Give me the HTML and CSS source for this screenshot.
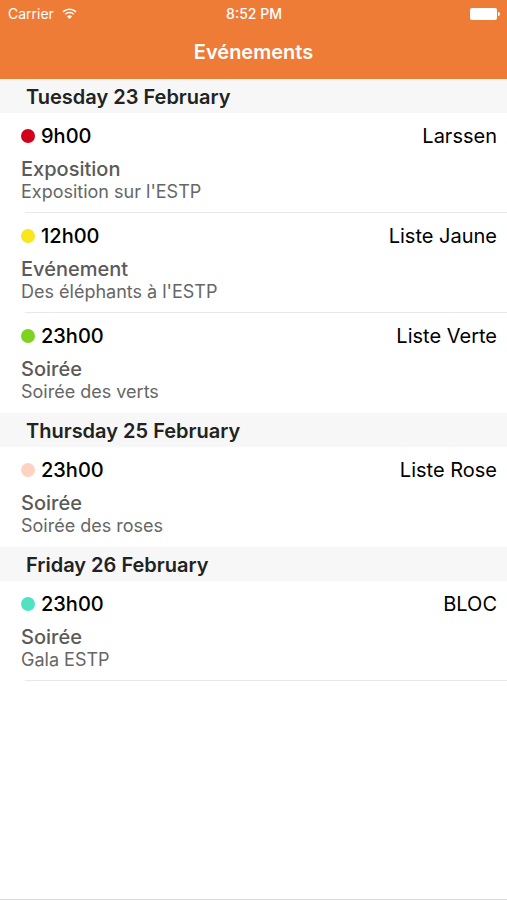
FILE: index.html
```html
<!DOCTYPE html>
<html lang="fr">
<head>
    <meta charset="UTF-8">
    <meta name="viewport" content="width=device-width, initial-scale=1.0">
    <title>Evénements</title>
    <link rel="stylesheet" href="styles.css">
</head>
<body>

<header class="topBar">
    <div class="statusBar">
        <div class="carrier">
            <span>Carrier</span>
            <svg class="wifi" viewBox="0 0 16 12" width="15" height="11">
                <path d="M1 4.2a10 10 0 0 1 14 0M3.4 6.8a6.6 6.6 0 0 1 9.2 0" fill="none" stroke="#fff" stroke-width="1.8"/>
                <path d="M8 12L5.3 9.2a3.8 3.8 0 0 1 5.4 0z" fill="#fff"/>
            </svg>
        </div>
        <div class="clock">8:52 PM</div>
        <div class="battery">
            <svg viewBox="0 0 30 12" width="30" height="12">
                <rect x="0" y="0" width="27" height="12" rx="2" fill="#fff"/>
                <path d="M28 4a2 2 0 0 1 0 4z" fill="#fff"/>
            </svg>
        </div>
    </div>
    <h1>Evénements</h1>
</header>

<main class="agenda">
    <section>
        <h2>Tuesday 23 February</h2>
        <ul>
            <li class="event">
                <div class="eventHead">
                    <span class="dot red"></span>
                    <span class="time">9h00</span>
                    <span class="host">Larssen</span>
                </div>
                <h3>Exposition</h3>
                <p>Exposition sur l'ESTP</p>
            </li>
            <li class="event">
                <div class="eventHead">
                    <span class="dot yellow"></span>
                    <span class="time">12h00</span>
                    <span class="host">Liste Jaune</span>
                </div>
                <h3>Evénement</h3>
                <p>Des éléphants à l'ESTP</p>
            </li>
            <li class="event">
                <div class="eventHead">
                    <span class="dot green"></span>
                    <span class="time">23h00</span>
                    <span class="host">Liste Verte</span>
                </div>
                <h3>Soirée</h3>
                <p>Soirée des verts</p>
            </li>
        </ul>
    </section>
    <section>
        <h2>Thursday 25 February</h2>
        <ul>
            <li class="event">
                <div class="eventHead">
                    <span class="dot pink"></span>
                    <span class="time">23h00</span>
                    <span class="host">Liste Rose</span>
                </div>
                <h3>Soirée</h3>
                <p>Soirée des roses</p>
            </li>
        </ul>
    </section>
    <section>
        <h2>Friday 26 February</h2>
        <ul>
            <li class="event">
                <div class="eventHead">
                    <span class="dot teal"></span>
                    <span class="time">23h00</span>
                    <span class="host">BLOC</span>
                </div>
                <h3>Soirée</h3>
                <p>Gala ESTP</p>
            </li>
        </ul>
    </section>
</main>

</body>
</html>
```
FILE: styles.css
```css
* {
    box-sizing: border-box;
}
body {
    font-family: Inter, "Liberation Sans", sans-serif;
    background-color: #fff;
    color: #000;
    display: flex;
    flex-direction: column;
    min-height: 100vh;
    margin: 0;
}
h1, h2, h3, p, ul {
    margin: 0;
    padding: 0;
}
ul {
    list-style: none;
}
.topBar {
    background-color: #ee7c37;
    color: #fff;
    padding-bottom: 14px;
}
.statusBar {
    display: grid;
    grid-template-columns: 1fr auto 1fr;
    align-items: center;
    height: 27px;
    padding: 0 7px 0 8px;
    font-size: 14px;
}
.carrier {
    display: flex;
    align-items: center;
    gap: 8px;
}
.clock {
    font-weight: 500;
}
.battery {
    display: flex;
    justify-content: flex-end;
}
h1 {
    font-size: 20px;
    line-height: 26px;
    font-weight: 600;
    text-align: center;
    padding-top: 12px;
}
.agenda {
    flex: 1;
    border-bottom: 1px solid #dcdcdc;
}
h2 {
    background-color: #f7f7f7;
    color: #222;
    font-size: 20px;
    line-height: 32px;
    font-weight: 600;
    padding: 2px 0 0 26px;
}
.event {
    padding: 10px 10px 10px 21px;
    background: linear-gradient(#e8e8e8, #e8e8e8) 25px 100% / 100% 1px no-repeat;
}
section:not(:last-child) .event:last-child {
    background: none;
}
.eventHead {
    display: flex;
    align-items: center;
    font-size: 20px;
    line-height: 26px;
}
.dot {
    width: 14px;
    height: 14px;
    margin-right: 6px;
    border-radius: 50%;
}
.time {
    font-weight: 500;
}
.host {
    margin-left: auto;
}
h3 {
    color: #5a5a5a;
    font-size: 20px;
    line-height: 24px;
    font-weight: 500;
    padding-top: 8px;
}
p {
    color: #666;
    font-size: 18px;
    line-height: 22px;
}
.red {
    background-color: #d0021b;
}
.yellow {
    background-color: #f8e71c;
}
.green {
    background-color: #7ed321;
}
.pink {
    background-color: #ffd3c4;
}
.teal {
    background-color: #50e3c2;
}
```
